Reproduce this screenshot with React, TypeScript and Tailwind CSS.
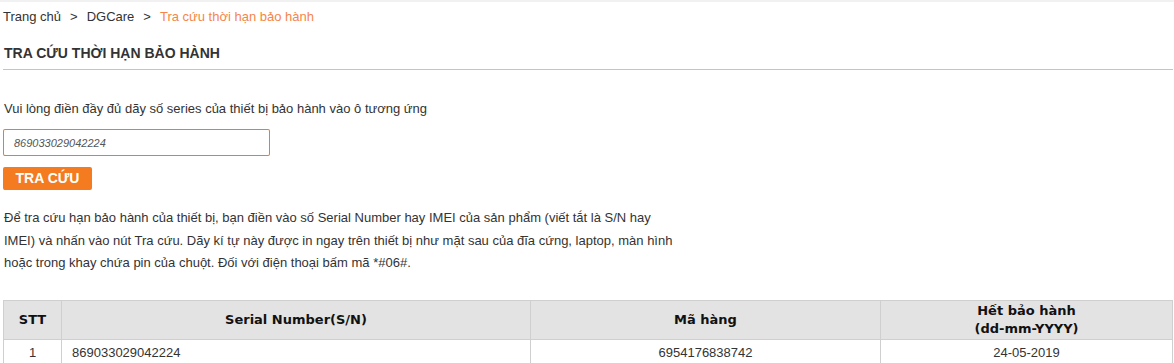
// Trang tra cứu thời hạn bảo hành

const rows = [
  { stt: 1, serial: "869033029042224", sku: "6954176838742", end: "24-05-2019" },
];

const Breadcrumb = () => {
  return (
    <div className="mt-[5px] flex h-[20px] items-center text-[13px] leading-[20px] text-[#333]">
      <span>Trang chủ</span>
      <span className="mx-[9px]">&gt;</span>
      <span>DGCare</span>
      <span className="mx-[9px]">&gt;</span>
      <span className="text-[#f5854a]">Tra cứu thời hạn bảo hành</span>
    </div>
  );
};

const WarrantyTable = () => {
  return (
    <table className="mt-[25px] w-[1170px] table-fixed border-collapse text-[13px]">
      <colgroup>
        <col className="w-[58px]" />
        <col className="w-[469px]" />
        <col className="w-[350px]" />
        <col />
      </colgroup>
      <thead>
        <tr className="bg-[#e3e3e3] font-['DejaVu_Sans',sans-serif] text-[13px] font-bold leading-[18px] text-[#111]">
          <th className="border border-[#cfcfcf] py-[1px]">STT</th>
          <th className="border border-[#cfcfcf] py-[1px]">Serial Number(S/N)</th>
          <th className="border border-[#cfcfcf] py-[1px]">Mã hàng</th>
          <th className="border border-[#cfcfcf] py-[1px]">
            Hết bảo hành
            <br />
            (dd-mm-YYYY)
          </th>
        </tr>
      </thead>
      <tbody>
        {rows.map((r) => (
          <tr key={r.stt} className="leading-[18px] text-[#333]">
            <td className="border border-[#cfcfcf] py-[4px] text-center">{r.stt}</td>
            <td className="border border-[#cfcfcf] py-[4px] pl-[10px]">{r.serial}</td>
            <td className="border border-[#cfcfcf] py-[4px] text-center">{r.sku}</td>
            <td className="border border-[#cfcfcf] py-[4px] text-center">{r.end}</td>
          </tr>
        ))}
      </tbody>
    </table>
  );
};

export default function App() {
  return (
    <div className="min-h-[363px] border-t-2 border-[#f1f1f1] bg-white pl-[3px] font-['Liberation_Sans',Arial,sans-serif]">
      <Breadcrumb />
      <div className="w-[1170px] border-b border-[#c4c4c4] pt-[16px] pb-[6px]">
        <h1 className="pl-[1px] text-[14px] leading-[20px] font-bold text-[#333]">
          TRA CỨU THỜI HẠN BẢO HÀNH
        </h1>
      </div>
      <p className="mt-[29px] pl-[1px] text-[13px] leading-[20px] text-[#333]">
        Vui lòng điền đầy đủ dãy số series của thiết bị bảo hành vào ô tương ứng
      </p>
      <div className="mt-[10px] h-[27px] w-[267px] rounded-[2px] bg-[#f37a1f] p-[1px]">
        <input
          type="text"
          placeholder="869033029042224"
          className="block h-full w-full rounded-[1px] border-0 bg-white px-[10px] text-[11px] italic text-[#333] outline-none placeholder:text-[#555]"
        />
      </div>
      <button className="mt-[11px] block h-[23px] w-[89px] rounded-[2px] bg-[#f47b20] text-[14px] font-bold text-white">
        TRA CỨU
      </button>
      <p className="mt-[17px] w-[680px] pl-[1px] text-[13px] leading-[22.5px] text-[#333]">
        Để tra cứu hạn bảo hành của thiết bị, bạn điền vào số Serial Number hay IMEI của sản phẩm (viết tắt là S/N hay
        IMEI) và nhấn vào nút Tra cứu. Dãy kí tự này được in ngay trên thiết bị như mặt sau của đĩa cứng, laptop, màn hình
        hoặc trong khay chứa pin của chuột. Đối với điện thoại bấm mã *#06#.
      </p>
      <WarrantyTable />
    </div>
  );
}
